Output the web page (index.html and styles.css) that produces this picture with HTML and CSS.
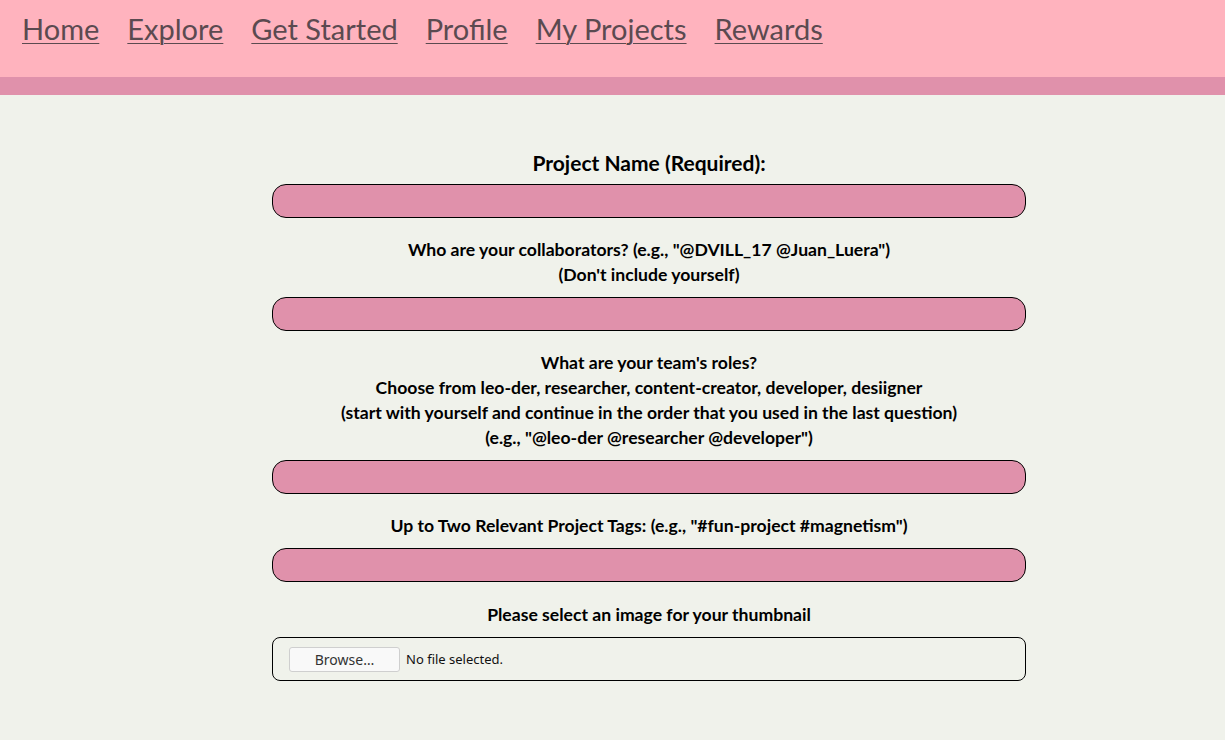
FILE: index.html
```html
<!DOCTYPE html>
<html>
<head>
<meta charset="utf-8">
<link rel="stylesheet" href="styles.css">
</head>
<body>
<header class="topbar">
  <nav class="nav">
    <a href="#">Home</a>
    <a href="#">Explore</a>
    <a href="#">Get Started</a>
    <a href="#">Profile</a>
    <a href="#">My Projects</a>
    <a href="#">Rewards</a>
  </nav>
</header>
<div class="stripe"></div>
<main class="page">
  <form class="form">
    <label class="label label-main">Project Name (Required):</label>
    <div class="input"></div>
    <label class="label">Who are your collaborators? (e.g., "@DVILL_17 @Juan_Luera")<br>(Don't include yourself)</label>
    <div class="input"></div>
    <label class="label">What are your team's roles?<br>Choose from leo-der, researcher, content-creator, developer, desiigner<br>(start with yourself and continue in the order that you used in the last question)<br>(e.g., "@leo-der @researcher @developer")</label>
    <div class="input"></div>
    <label class="label">Up to Two Relevant Project Tags: (e.g., "#fun-project #magnetism")</label>
    <div class="input"></div>
    <label class="label label-last">Please select an image for your thumbnail</label>
    <div class="filebox">
      <span class="browse">Browse…</span>
      <span class="nofile">No file selected.</span>
    </div>
  </form>
</main>
</body>
</html>
```
FILE: styles.css
```css
html, body {
  margin: 0;
  padding: 0;
}
body {
  background: #f0f2eb;
  font-family: "Lato", "Liberation Sans", sans-serif;
  color: #000;
  height: 740px;
}
.topbar {
  background: #ffb3be;
  height: 77px;
}
.nav {
  display: flex;
  gap: 28px;
  padding: 9px 0 0 22px;
}
.nav a {
  color: #5b4a50;
  font-size: 29px;
  line-height: 40px;
  text-decoration: underline;
  text-decoration-thickness: 1px;
  text-underline-offset: 3px;
}
.stripe {
  background: #e091ab;
  height: 18px;
}
.page {
  padding: 54px 0 0 272px;
}
.form {
  width: 754px;
  display: flex;
  flex-direction: column;
}
.label {
  display: block;
  text-align: center;
  font-weight: bold;
  font-size: 17.6px;
  line-height: 25px;
  margin-bottom: 10px;
  padding-top: 1px;
}
.label-main {
  font-size: 21px;
  line-height: 28px;
  margin-bottom: 7px;
  padding-top: 0;
}
.label-last {
  padding-top: 2px;
}
.input {
  height: 32px;
  border: 1px solid #000;
  border-radius: 14px;
  background: #e091ab;
  margin-bottom: 18px;
}
.filebox {
  height: 42px;
  border: 1px solid #000;
  border-radius: 8px;
  display: flex;
  align-items: center;
  padding-left: 16px;
  gap: 6px;
  font-family: "Noto Sans", "DejaVu Sans", sans-serif;
  font-size: 13px;
}
.browse {
  width: 109px;
  height: 23px;
  border: 1px solid #cfcfcf;
  border-radius: 3px;
  background: #f9f9f9;
  color: #333;
  display: flex;
  align-items: center;
  justify-content: center;
  font-size: 14px;
}
.nofile {
  color: #111;
}
```
